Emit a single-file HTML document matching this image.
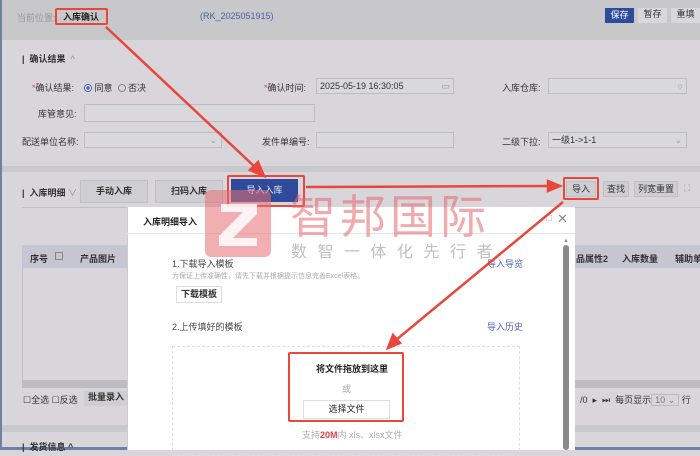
<!DOCTYPE html>
<html><head><meta charset="utf-8"><style>
*{margin:0;padding:0;box-sizing:border-box}
body{width:700px;height:450px;overflow:hidden;background:#d8d6db;font-family:"Liberation Sans","Noto Sans CJK SC",sans-serif;font-size:9px;color:#333;position:relative}
.a{position:absolute;white-space:nowrap}
.inp{position:absolute;border:1px solid #bdbcc2;background:#d9d8dc;height:16px;font-size:9px;line-height:14px;padding-left:3px}
.btn{position:absolute;background:#cfced2;border:1px solid #c0bfc4;text-align:center;font-size:9px}
.b{font-weight:bold}
.rb{position:absolute;border:2px solid #e8473b;border-radius:2px}
</style></head><body>
<div class="a" style="left:0;top:0;width:700px;height:40px;background:#c8c8cb"></div>
<div class="a" style="left:0;top:0;width:2px;height:450px;background:#6f7fa6"></div>
<div class="a" style="left:0;top:447px;width:700px;height:3px;background:#6f7fa6"></div>
<div class="a" style="left:17px;top:11px;color:#999;font-size:9px">当前位置:</div>
<div class="a b" style="left:63px;top:10px;font-size:9px;color:#222">入库确认</div>
<div class="rb" style="left:55px;top:8px;width:53px;height:17px"></div>
<div class="a" style="left:200px;top:11px;color:#4a5ea6">(RK_2025051915)</div>
<div class="btn" style="left:605px;top:8px;width:29px;height:15px;background:#2f4c9c;border-color:#2f4c9c;color:#fff;line-height:13px">保存</div>
<div class="btn" style="left:638px;top:8px;width:29px;height:15px;line-height:13px;background:#d8d7db;border:none">暂存</div>
<div class="btn" style="left:671px;top:8px;width:29px;height:15px;line-height:13px;background:#d8d7db;border:none">重填</div>

<div class="a b" style="left:22px;top:52px">|&nbsp; 确认结果 &nbsp;<span style="font-weight:normal;color:#888">^</span></div>
<div class="a" style="left:32px;top:81px"><span style="color:#e04040">*</span>确认结果:</div>
<div class="a" style="left:84px;top:81px"><span style="display:inline-block;width:8px;height:8px;border-radius:50%;border:1px solid #3a5cc0;background:radial-gradient(#3a5cc0 40%,#fff 45%);vertical-align:-1px"></span> 同意 &nbsp;<span style="display:inline-block;width:8px;height:8px;border-radius:50%;border:1px solid #888;vertical-align:-1px"></span> 否决</div>
<div class="a" style="left:264px;top:81px"><span style="color:#e04040">*</span>确认时间:</div>
<div class="inp" style="left:316px;top:78px;width:138px">2025-05-19 16:30:05<span style="position:absolute;right:3px;color:#999">▭</span></div>
<div class="a" style="left:502px;top:81px">入库仓库:</div>
<div class="inp" style="left:548px;top:78px;width:139px"><span style="position:absolute;right:3px;color:#999">○</span></div>
<div class="a" style="left:38px;top:107px">库管意见:</div>
<div class="inp" style="left:84px;top:104px;width:231px;height:18px"></div>
<div class="a" style="left:22px;top:135px">配送单位名称:</div>
<div class="inp" style="left:84px;top:132px;width:138px"><span style="position:absolute;right:4px;color:#999">⌄</span></div>
<div class="a" style="left:262px;top:135px">发件单编号:</div>
<div class="inp" style="left:316px;top:132px;width:138px"></div>
<div class="a" style="left:502px;top:135px">二级下拉:</div>
<div class="inp" style="left:548px;top:132px;width:139px">一级1->1-1<span style="position:absolute;right:4px;color:#999">⌄</span></div>

<div class="a" style="left:2px;top:166px;width:698px;height:6px;background:#c9c8cc"></div>
<div class="a b" style="left:22px;top:186px">|&nbsp; 入库明细 <span style="font-weight:normal;color:#888">∨</span></div>
<div class="btn b" style="left:80px;top:180px;width:68px;height:23px;line-height:21px">手动入库</div>
<div class="btn b" style="left:155px;top:180px;width:68px;height:23px;line-height:21px">扫码入库</div>
<div class="btn" style="left:231px;top:179px;width:67px;height:23px;line-height:21px;background:#2f4a9a;border-color:#2f4a9a;color:#e8e8f0">导入入库</div>
<div class="rb" style="left:227px;top:175px;width:78px;height:32px"></div>
<div class="btn" style="left:566px;top:181px;width:30px;height:16px;line-height:14px">导入</div>
<div class="rb" style="left:563px;top:177px;width:36px;height:23px"></div>
<div class="btn" style="left:603px;top:181px;width:26px;height:16px;line-height:14px">查找</div>
<div class="btn" style="left:634px;top:181px;width:44px;height:16px;line-height:14px">列宽重置</div>
<div class="a" style="left:684px;top:183px;color:#999">⛶</div>
<div class="a" style="left:22px;top:207px;width:678px;height:1px;background:#c0bfc4"></div>

<div class="a" style="left:22px;top:245px;width:678px;height:23px;background:#c4c7d2"></div>
<div class="a b" style="left:30px;top:252px">序号</div>
<div class="a" style="left:55px;top:252px;width:8px;height:8px;border:1px solid #888"></div>
<div class="a b" style="left:80px;top:252px">产品图片</div>
<div class="a b" style="left:576px;top:252px">品属性2</div>
<div class="a b" style="left:622px;top:252px">入库数量</div>
<div class="a b" style="left:675px;top:252px">辅助单</div>
<div class="a" style="left:22px;top:268px;width:1px;height:112px;background:#c0bfc4"></div>
<div class="a" style="left:22px;top:380px;width:678px;height:8px;background:#bdbcc1"></div>
<div class="a" style="left:23px;top:393px">☐全选 ☐反选</div>
<div class="btn b" style="left:84px;top:391px;width:44px;height:15px;line-height:13px;border:none">批量录入</div>
<div class="a" style="left:580px;top:393px">/0 &nbsp;▸ &nbsp;⏭ &nbsp;每页显示<span style="border:1px solid #bbb;padding:0 3px;color:#777">10 ⌄</span> 行</div>
<div class="a" style="left:2px;top:425px;width:698px;height:7px;background:#c9c8cc"></div>
<div class="a b" style="left:22px;top:440px">|&nbsp; 发货信息 ^</div>

<div class="a" style="left:127px;top:207px;width:448px;height:243px;background:#fff;border-left:1px solid #ccc"></div>
<div class="a" style="left:127px;top:233px;width:448px;height:1px;background:#e6e6e6"></div>
<div class="a b" style="left:143px;top:215px;color:#222">入库明细导入</div>
<div class="a" style="left:546px;top:213px;color:#aaa;font-size:10px">□</div>
<div class="a" style="left:557px;top:211px;color:#888;font-size:13px">✕</div>
<div class="a" style="left:563px;top:238px;color:#999;font-size:6px">▲</div>
<div class="a" style="left:563px;top:245px;width:6px;height:205px;background:#8a8a8a;border-radius:3px"></div>
<div class="a" style="left:172px;top:257px;color:#444">1.下载导入模板</div>
<div class="a" style="left:172px;top:271px;color:#aaa;font-size:7px">为保证上传准确性，请先下载并根据提示信息完善Excel表格。</div>
<div class="btn b" style="left:176px;top:286px;width:46px;height:17px;line-height:15px;background:#fff;border-color:#ddd">下载模板</div>
<div class="a" style="left:487px;top:257px;color:#4a65b5">导入导览</div>
<div class="a" style="left:172px;top:320px;color:#444">2.上传填好的模板</div>
<div class="a" style="left:487px;top:320px;color:#4a65b5">导入历史</div>
<div class="a" style="left:172px;top:346px;width:348px;height:110px;border:1px dashed #ddd"></div>
<div class="a b" style="left:316px;top:362px;color:#222">将文件拖放到这里</div>
<div class="a" style="left:342px;top:382px;color:#aaa">或</div>
<div class="btn" style="left:303px;top:400px;width:87px;height:19px;line-height:17px;background:#fff;border-color:#ddd;color:#222">选择文件</div>
<div class="rb" style="left:288px;top:352px;width:116px;height:70px"></div>
<div class="a" style="left:302px;top:428px;color:#aaa">支持<span style="color:#e04040;font-weight:bold">20M</span>内 xls、xlsx文件</div>

<div class="a" style="left:205px;top:190px;width:66px;height:67px;background:rgba(232,110,115,0.55);border-radius:6px"></div>
<svg class="a" style="left:205px;top:190px" width="66" height="67"><path d="M16 14H52V24L28 48H52V56H14V46L38 22H16Z" fill="#fff" opacity="0.85"/></svg>
<div class="a" style="left:290px;top:186px;font-size:46px;color:rgba(232,100,105,0.55);font-family:'Noto Sans CJK SC',sans-serif;letter-spacing:4px;line-height:56px">智邦国际</div>
<div class="a" style="left:291px;top:238px;font-size:16px;color:rgba(150,150,150,0.6);letter-spacing:10.5px;font-family:'Noto Sans CJK SC',sans-serif">数智一体化先行者</div>

<svg class="a" style="left:0;top:0" width="700" height="450">
<g stroke="#e8473b" stroke-width="2.5" fill="#e8473b">
<line x1="106" y1="27" x2="256" y2="168"/>
<polygon points="264,176 250,170 258,162"/>
<line x1="306" y1="187" x2="550" y2="186"/>
<polygon points="560,186 548,181 548,191"/>
<line x1="563" y1="202" x2="396" y2="340"/>
<polygon points="388,348 393,335 400,343"/>
</g></svg>
</body></html>
